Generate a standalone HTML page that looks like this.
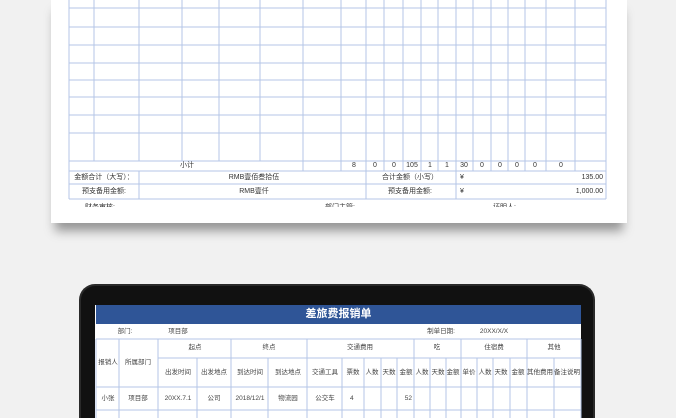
<!DOCTYPE html>
<html><head><meta charset="utf-8"><style>
*{margin:0;padding:0;box-sizing:border-box}
html{width:676px;height:418px;overflow:hidden}
body{width:676px;height:418px;overflow:hidden;background:#f1f1f1;position:relative;font-family:"Liberation Sans","Noto Sans CJK SC",sans-serif;color:#333}
.card{position:absolute;left:51px;top:-5px;width:576px;height:228px;background:#fff;box-shadow:0 12px 10px -4px rgba(0,0,0,.38)}
.t{position:absolute;font-size:7px;line-height:9px;white-space:nowrap;color:#333}
.c{transform:translateX(-50%)}
.r{transform:translateX(-100%)}
.frame{position:absolute;left:79px;top:284px;width:516px;height:134px;background:#111;border-radius:16px 16px 0 0;border:2px solid #2a2a2a;border-bottom:none}
.scr{position:absolute;left:95px;top:305px;width:486px;height:113px;background:#fff}
.bar{position:absolute;left:96px;top:305px;width:485px;height:19px;background:#2f5597;color:#fff;font-weight:bold;font-size:11px;line-height:19px;text-align:center}
.s{font-size:6.5px;line-height:8px;color:#444}
</style></head><body>
<div class="card"></div>
<svg style="position:absolute;left:0;top:0" width="676" height="210">
<g stroke="#b4c6e7" stroke-width="1" fill="none">
<path d="M69 8H606M69 27H606M69 45H606M69 63H606M69 80H606M69 97H606M69 115H606M69 133H606M69 161H606M69 171H606M69 184H606M69 199H606"/>
<path d="M69 0V199M606 0V199M94 0V161M139 0V161M182 0V161M219 0V161M260 0V161M303 0V171M341 0V171M366 0V199M384 0V171M403 0V171M421 0V171M438 0V171M456 0V199M473 0V171M491 0V171M508 0V171M525 0V171M546 0V171M575 0V171M139 171V199"/>
</g></svg>
<div class="t c" style="left:187px;top:161px">小计</div>
<div class="t c" style="left:354px;top:161px">8</div>
<div class="t c" style="left:375px;top:161px">0</div>
<div class="t c" style="left:394px;top:161px">0</div>
<div class="t c" style="left:412px;top:161px">105</div>
<div class="t c" style="left:430px;top:161px">1</div>
<div class="t c" style="left:447px;top:161px">1</div>
<div class="t c" style="left:464px;top:161px">30</div>
<div class="t c" style="left:482px;top:161px">0</div>
<div class="t c" style="left:500px;top:161px">0</div>
<div class="t c" style="left:517px;top:161px">0</div>
<div class="t c" style="left:535px;top:161px">0</div>
<div class="t c" style="left:561px;top:161px">0</div>
<div class="t c" style="left:104px;top:173px">金额合计（大写）：</div>
<div class="t c" style="left:254px;top:173px">RMB壹佰叁拾伍</div>
<div class="t c" style="left:410px;top:173px">合计金额（小写）</div>
<div class="t" style="left:460px;top:173px">¥</div>
<div class="t r" style="left:603px;top:173px">135.00</div>
<div class="t c" style="left:104px;top:187px">预支备用金额:</div>
<div class="t c" style="left:254px;top:187px">RMB壹仟</div>
<div class="t c" style="left:410px;top:187px">预支备用金额:</div>
<div class="t" style="left:460px;top:187px">¥</div>
<div class="t r" style="left:603px;top:187px">1,000.00</div>
<div style="position:absolute;left:60px;top:203px;width:560px;height:4px;overflow:hidden">
<div class="t" style="left:25px;top:0">财务审核:</div>
<div class="t" style="left:265px;top:0">部门主管:</div>
<div class="t" style="left:433px;top:0">证明人:</div>
</div>
<div class="frame"></div>
<div class="scr"></div>
<div class="bar">差旅费报销单</div>
<svg style="position:absolute;left:0;top:0" width="676" height="418">
<g stroke="#b4c6e7" stroke-width="1" fill="none">
<path d="M96 339H581M158 358H581M96 387H581M96 410H581"/>
<path d="M96 339V418M119 339V418M158 339V418M231 339V418M307 339V418M414 339V418M461 339V418M527 339V418M581 339V418M197 358V418M268 358V418M342 358V418M364 358V418M381 358V418M397 358V418M430 358V418M446 358V418M477 358V418M493 358V418M510 358V418M554 358V418"/>
</g></svg>
<div class="t s c" style="left:125px;top:328px">部门:</div>
<div class="t s c" style="left:178px;top:328px">项目部</div>
<div class="t s c" style="left:441px;top:328px">制单日期:</div>
<div class="t s c" style="left:494px;top:328px">20XX/X/X</div>
<div class="t s c" style="left:108px;top:359px">报销人</div>
<div class="t s c" style="left:138px;top:359px">所属部门</div>
<div class="t s c" style="left:195px;top:344px">起点</div>
<div class="t s c" style="left:269px;top:344px">终点</div>
<div class="t s c" style="left:360px;top:344px">交通费用</div>
<div class="t s c" style="left:437px;top:344px">吃</div>
<div class="t s c" style="left:494px;top:344px">住宿费</div>
<div class="t s c" style="left:554px;top:344px">其他</div>
<div class="t s c" style="left:178px;top:369px">出发时间</div>
<div class="t s c" style="left:214px;top:369px">出发地点</div>
<div class="t s c" style="left:250px;top:369px">到达时间</div>
<div class="t s c" style="left:288px;top:369px">到达地点</div>
<div class="t s c" style="left:325px;top:369px">交通工具</div>
<div class="t s c" style="left:353px;top:369px">票数</div>
<div class="t s c" style="left:372px;top:369px">人数</div>
<div class="t s c" style="left:389px;top:369px">天数</div>
<div class="t s c" style="left:406px;top:369px">金额</div>
<div class="t s c" style="left:422px;top:369px">人数</div>
<div class="t s c" style="left:438px;top:369px">天数</div>
<div class="t s c" style="left:453px;top:369px">金额</div>
<div class="t s c" style="left:469px;top:369px">单价</div>
<div class="t s c" style="left:485px;top:369px">人数</div>
<div class="t s c" style="left:501px;top:369px">天数</div>
<div class="t s c" style="left:518px;top:369px">金额</div>
<div class="t s c" style="left:540px;top:369px">其他费用</div>
<div class="t s c" style="left:567px;top:369px">备注说明</div>
<div class="t s c" style="left:108px;top:395px">小张</div>
<div class="t s c" style="left:138px;top:395px">项目部</div>
<div class="t s c" style="left:178px;top:395px">20XX.7.1</div>
<div class="t s c" style="left:214px;top:395px">公司</div>
<div class="t s c" style="left:250px;top:395px">2018/12/1</div>
<div class="t s c" style="left:288px;top:395px">物流园</div>
<div class="t s c" style="left:325px;top:395px">公交车</div>
<div class="t s" style="left:350px;top:395px">4</div>
<div class="t s r" style="left:412px;top:395px">52</div>
</body></html>
